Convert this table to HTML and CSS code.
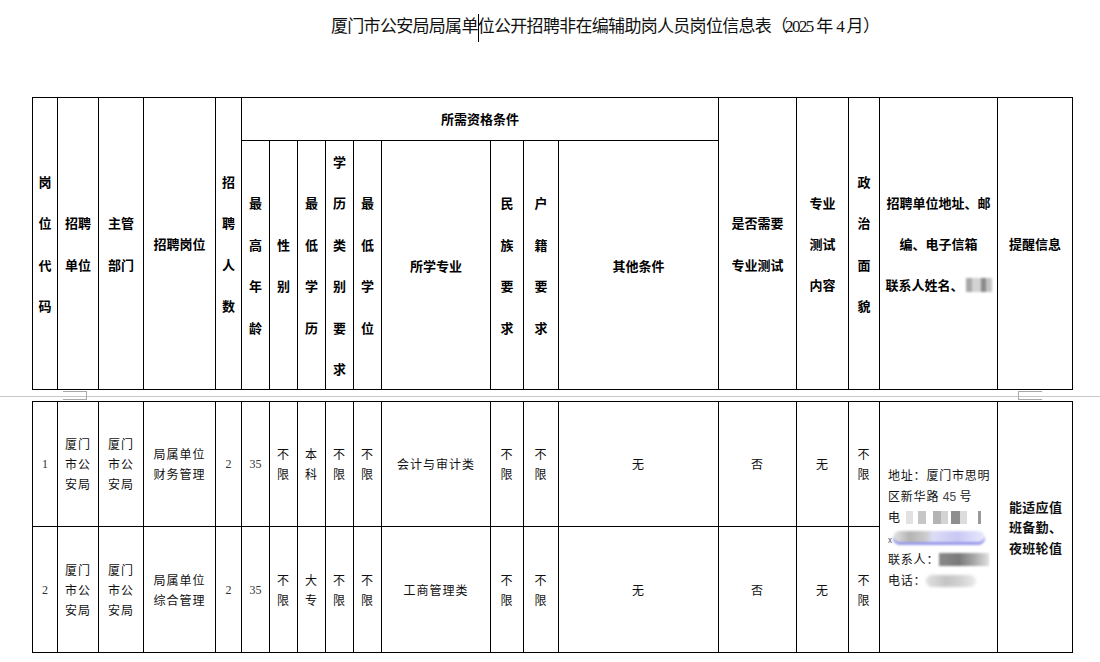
FILE: index.html
```html
<!DOCTYPE html>
<html lang="zh-CN">
<head>
<meta charset="utf-8">
<title>岗位信息表</title>
<link rel="stylesheet" href="styles.css">
</head>
<body>
<h1 class="title">厦门市公安局局属单<span class="caret"></span>位公开招聘非在编辅助岗人员岗位信息表<span class="paren">（</span><span class="yr">2025</span> 年 <span class="yr">4</span> 月<span class="paren">）</span></h1>

<table class="grid head">
  <colgroup>
    <col class="c-code"><col class="c-unit"><col class="c-dept"><col class="c-post"><col class="c-num">
    <col class="c-s"><col class="c-s"><col class="c-s"><col class="c-s"><col class="c-s">
    <col class="c-major"><col class="c-eth"><col class="c-hh"><col class="c-other">
    <col class="c-test"><col class="c-tc"><col class="c-pol"><col class="c-addr"><col class="c-rem">
  </colgroup>
  <tr class="r1">
    <td rowspan="2">岗<br>位<br>代<br>码</td>
    <td rowspan="2">招聘<br>单位</td>
    <td rowspan="2">主管<br>部门</td>
    <td rowspan="2">招聘岗位</td>
    <td rowspan="2">招<br>聘<br>人<br>数</td>
    <td colspan="9">所需资格条件</td>
    <td rowspan="2">是否需要<br>专业测试</td>
    <td rowspan="2">专业<br>测试<br>内容</td>
    <td rowspan="2">政<br>治<br>面<br>貌</td>
    <td rowspan="2">招聘单位地址、邮<br>编、电子信箱<br>联系人姓名、<span class="blur-h"></span></td>
    <td rowspan="2">提醒信息</td>
  </tr>
  <tr class="r2">
    <td>最<br>高<br>年<br>龄</td>
    <td>性<br>别</td>
    <td>最<br>低<br>学<br>历</td>
    <td>学<br>历<br>类<br>别<br>要<br>求</td>
    <td>最<br>低<br>学<br>位</td>
    <td>所学专业</td>
    <td>民<br>族<br>要<br>求</td>
    <td>户<br>籍<br>要<br>求</td>
    <td>其他条件</td>
  </tr>
</table>

<div class="sep"><span class="mark mark-l"></span><span class="mark mark-r"></span></div>

<table class="grid data">
  <colgroup>
    <col class="c-code"><col class="c-unit"><col class="c-dept"><col class="c-post"><col class="c-num">
    <col class="c-s"><col class="c-s"><col class="c-s"><col class="c-s"><col class="c-s">
    <col class="c-major"><col class="c-eth"><col class="c-hh"><col class="c-other">
    <col class="c-test"><col class="c-tc"><col class="c-pol"><col class="c-addr"><col class="c-rem">
  </colgroup>
  <tr class="row-a">
    <td class="num">1</td>
    <td>厦门<br>市公<br>安局</td>
    <td>厦门<br>市公<br>安局</td>
    <td>局属单位<br>财务管理</td>
    <td class="num">2</td>
    <td class="num">35</td>
    <td>不<br>限</td>
    <td>本<br>科</td>
    <td>不<br>限</td>
    <td>不<br>限</td>
    <td>会计与审计类</td>
    <td>不<br>限</td>
    <td>不<br>限</td>
    <td>无</td>
    <td>否</td>
    <td>无</td>
    <td>不<br>限</td>
    <td rowspan="2" class="addr"><div class="ln">地址：厦门市思明</div><div class="ln">区新华路 <span class="digits">45</span> 号</div><div class="ln">电<span class="blur-a"></span></div><div class="ln"><span class="tiny">x</span><span class="blur-b"></span></div><div class="ln">联系人：<span class="blur-c"></span></div><div class="ln">电话：<span class="blur-d"></span></div></td>
    <td rowspan="2" class="remind">能适应值<br>班备勤、<br>夜班轮值</td>
  </tr>
  <tr class="row-b">
    <td class="num">2</td>
    <td>厦门<br>市公<br>安局</td>
    <td>厦门<br>市公<br>安局</td>
    <td>局属单位<br>综合管理</td>
    <td class="num">2</td>
    <td class="num">35</td>
    <td>不<br>限</td>
    <td>大<br>专</td>
    <td>不<br>限</td>
    <td>不<br>限</td>
    <td>工商管理类</td>
    <td>不<br>限</td>
    <td>不<br>限</td>
    <td>无</td>
    <td>否</td>
    <td>无</td>
    <td>不<br>限</td>
  </tr>
</table>
</body>
</html>
```

FILE: styles.css
```css
html, body {
  margin: 0;
  padding: 0;
  background: #fff;
  color: #000;
  font-family: "Noto Sans CJK SC", sans-serif;
}

.title {
  box-sizing: border-box;
  height: 97px;
  margin: 0;
  padding: 14px 0 0 331px;
  font: 400 17px/24px "Liberation Serif", "Noto Sans CJK SC", serif;
  letter-spacing: -0.7px;
  color: #111;
  white-space: nowrap;
}

.title .paren {
  letter-spacing: -3px;
}

.title .yr {
  letter-spacing: -1.6px;
}

.caret {
  display: inline-block;
  width: 1px;
  height: 28px;
  margin-right: -1px;
  background: #000;
  vertical-align: middle;
}

.grid {
  border-collapse: collapse;
  table-layout: fixed;
  width: 1040px;
  margin-left: 32px;
}

.grid td {
  border: 1px solid #000;
  padding: 0;
  text-align: center;
  vertical-align: middle;
  overflow: hidden;
}

.c-code { width: 25px; }
.c-unit { width: 41px; }
.c-dept { width: 45px; }
.c-post { width: 72px; }
.c-num { width: 26px; }
.c-s { width: 28px; }
.c-major { width: 109px; }
.c-eth { width: 33px; }
.c-hh { width: 35px; }
.c-other { width: 160px; }
.c-test { width: 78px; }
.c-tc { width: 52px; }
.c-pol { width: 31px; }
.c-addr { width: 118px; }
.c-rem { width: 75px; }

.head td {
  font-weight: 700;
  font-size: 13px;
  line-height: 41.4px;
  white-space: nowrap;
}

.head .r1 td { height: 42px; }
.head .r2 td { height: 247px; }

.blur-h {
  display: inline-block;
  width: 28px;
  height: 14px;
  vertical-align: -2px;
  background: linear-gradient(90deg, #fff 0 8%, #a8a8a8 8% 30%, #d2d2d2 30% 62%, #8a8a8a 62% 80%, #c4c4c4 80% 100%);
  filter: blur(0.9px);
}

.sep {
  position: relative;
  height: 6px;
  border-bottom: 1px solid #c8c8c8;
  margin-bottom: 4px;
}

.mark {
  position: absolute;
  top: 1px;
  width: 23px;
  height: 7px;
  border: 1px solid #a9a9a9;
}

.mark-l { left: 63px; border-left: none; }
.mark-r { left: 1018px; border-right: none; }

.data td {
  font-size: 12px;
  line-height: 20px;
  letter-spacing: 1px;
  color: #111;
}

.data .row-a td { height: 124px; }
.data .row-b td { height: 125px; }

.data td.num {
  font-family: "Liberation Serif", serif;
  font-size: 12px;
  letter-spacing: 0;
  color: #333;
}

.data td.addr {
  text-align: left;
  padding-left: 8px;
  letter-spacing: 0.8px;
  white-space: nowrap;
}

.ln {
  height: 21px;
  line-height: 21px;
  overflow: visible;
}

.digits {
  font-family: "Liberation Sans", sans-serif;
  color: #444;
  letter-spacing: 0;
}

.tiny {
  font-size: 8px;
  color: #555;
}

.blur-a,
.blur-b,
.blur-c,
.blur-d {
  display: inline-block;
  vertical-align: -2px;
}

.blur-a {
  width: 84px;
  height: 13px;
  background: linear-gradient(90deg, #fff 0 6%, #e2e2e2 6% 14%, #fff 14% 20%, #c6c6c6 20% 30%, #fff 30% 38%, #b4b4b4 38% 48%, #d4d4d4 48% 56%, #fff 56% 60%, #8e8e8e 60% 70%, #dcdcdc 70% 78%, #fff 78% 92%, #9a9a9a 92% 95%, #fff 95%);
  filter: blur(0.7px);
}

.blur-b {
  width: 92px;
  height: 14px;
  border-radius: 7px;
  background: linear-gradient(90deg, #e4e4e4 0, #b4b4b4 18%, #c9c9c9 34%, #dcdcf6 44%, #c8c8f4 70%, #eaeaff 100%);
  box-shadow: inset 0 -3px 0 #9b9bea;
  filter: blur(1.3px);
}

.blur-c {
  width: 50px;
  height: 13px;
  background: linear-gradient(90deg, #8a8a8a 0, #7a7a7a 40%, #a8a8a8 70%, #e0e0e0 100%);
  filter: blur(1.1px);
}

.blur-d {
  width: 50px;
  height: 12px;
  border-radius: 6px;
  background: linear-gradient(90deg, #e0e0e0 0, #c4c4c4 40%, #d2d2d2 70%, #ececec 100%);
  filter: blur(1.8px);
}

.data td.remind {
  text-align: left;
  padding-left: 11px;
  font-weight: 700;
  font-size: 13px;
  line-height: 20.5px;
  letter-spacing: 0.3px;
}
```
